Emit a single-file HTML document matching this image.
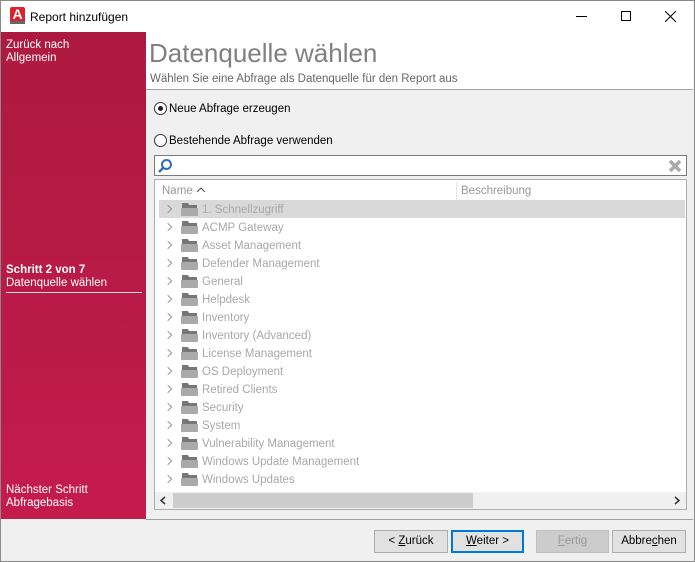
<!DOCTYPE html>
<html><head><meta charset="utf-8"><style>
*{box-sizing:border-box;margin:0;padding:0}
body{width:695px;height:562px;overflow:hidden;font-family:"Liberation Sans",sans-serif;font-size:12px;background:#f0f0f0;position:relative}
.abs{position:absolute}
.win{left:0;top:0;width:695px;height:562px;border:1px solid #8a8a8a;background:#f0f0f0}
.title{left:1px;top:1px;width:692px;height:31px;background:#fff}
.side{left:1px;top:32px;width:145px;height:487px;background:linear-gradient(#ad1a3f,#b81b45 50%,#c41b4d);color:#fff;font-size:11.5px;line-height:13px}
.hdr{left:146px;top:32px;width:547px;height:58px;background:#fff;border-bottom:1px solid #a0a0a0}
.row{position:absolute;left:4px;width:526px;height:18px;color:#a8a8a8;font-size:11.5px;line-height:18px}
.row .chev{position:absolute;left:6px;top:6px;width:6px;height:6px;border-right:1.5px solid #999;border-top:1.5px solid #999;transform:rotate(45deg)}
.row .fold{position:absolute;left:22px;top:3px;width:17px;height:13px}
.row span{position:absolute;left:43px}
.btn{position:absolute;top:530px;height:23px;border:1px solid #adadad;background:#e1e1e1;font-size:11.5px;text-align:center;line-height:21px;color:#000}
.radio{position:absolute;width:13px;height:13px;border:1px solid #333;border-radius:50%;background:#fff}
</style></head><body>
<div class="abs win"></div>
<div class="abs title">
 <div class="abs" style="left:9px;top:6px;width:15px;height:17px;background:#d8252d;border-radius:2px;color:#fff;font-weight:bold;font-size:14px;line-height:15px;text-align:center">A<div style="position:absolute;left:0;bottom:0;width:15px;height:3px;background:#666"></div></div>
 <div class="abs" style="left:29px;top:9px;font-size:12px;color:#000">Report hinzufügen</div>
 <div class="abs" style="left:575px;top:15px;width:11px;height:1px;background:#000"></div>
 <div class="abs" style="left:620px;top:10px;width:10px;height:10px;border:1px solid #000"></div>
 <svg class="abs" style="left:664px;top:10px" width="11" height="11"><path d="M0 0L11 11M11 0L0 11" stroke="#000" stroke-width="1"/></svg>
</div>
<div class="abs side">
 <div class="abs" style="left:5px;top:7px">Zurück nach<br>Allgemein</div>
 <div class="abs" style="left:5px;top:232px"><b>Schritt 2 von 7</b><br>Datenquelle wählen</div>
 <div class="abs" style="left:5px;top:260px;width:136px;height:1px;background:#ddd"></div>
 <div class="abs" style="left:5px;top:452px">Nächster Schritt<br>Abfragebasis</div>
</div>
<div class="abs hdr">
 <div class="abs" style="left:3px;top:6px;font-size:26px;color:#808080;font-weight:300">Datenquelle wählen</div>
 <div class="abs" style="left:4px;top:41px;font-size:11.5px;color:#666">Wählen Sie eine Abfrage als Datenquelle für den Report aus</div>
</div>
<div class="radio" style="left:154px;top:102px"><div style="position:absolute;left:3px;top:3px;width:5px;height:5px;border-radius:50%;background:#222"></div></div>
<div class="abs" style="left:169px;top:103px;font-size:11.5px">Neue Abfrage erzeugen</div>
<div class="radio" style="left:154px;top:134px"></div>
<div class="abs" style="left:169px;top:135px;font-size:11.5px">Bestehende Abfrage verwenden</div>
<div class="abs" style="left:154px;top:155px;width:533px;height:21px;background:#fff;border:1px solid #7a7a7a">
 <svg class="abs" style="left:2px;top:2px" width="16" height="16"><circle cx="9.5" cy="6.5" r="4.5" fill="none" stroke="#2f6db5" stroke-width="2"/><path d="M6 10L2 14" stroke="#2f6db5" stroke-width="2.5"/></svg>
 <svg class="abs" style="left:513px;top:3px" width="14" height="14"><path d="M2 2L12 12M12 2L2 12" stroke="#aaa" stroke-width="3.5"/></svg>
</div>
<div class="abs" style="left:154px;top:179px;width:533px;height:331px;background:#fff;border:1px solid #adadad">
 <div class="abs" style="left:7px;top:5px;color:#999;font-size:11.5px">Name</div>
 <svg class="abs" style="left:41px;top:7px" width="10" height="6"><path d="M1 5L5 1L9 5" fill="none" stroke="#555"/></svg>
 <div class="abs" style="left:301px;top:2px;width:1px;height:18px;background:#e5e5e5"></div>
 <div class="abs" style="left:306px;top:5px;color:#999;font-size:11.5px">Beschreibung</div>
 <div id="rows"></div>
 <div class="abs" style="left:0;top:312px;width:531px;height:17px;background:#f0f0f0"></div>
 <div class="abs" style="left:18px;top:313px;width:300px;height:15px;background:#cdcdcd"></div>
 <svg class="abs" style="left:4px;top:316px" width="8" height="9"><path d="M6 1L2 4.5L6 8" fill="none" stroke="#333" stroke-width="1.5"/></svg>
 <svg class="abs" style="left:518px;top:316px" width="8" height="9"><path d="M2 1L6 4.5L2 8" fill="none" stroke="#333" stroke-width="1.5"/></svg>
</div>
<div class="abs" style="left:146px;top:519px;width:547px;height:1px;background:#a0a0a0"></div>
<div class="btn" style="left:374px;width:74px">&lt; <u>Z</u>urück</div>
<div class="btn" style="left:451px;width:73px;border:2px solid #0078d7;line-height:19px"><u>W</u>eiter &gt;</div>
<div class="btn" style="left:536px;width:73px;border-color:#bfbfbf;background:#ccc;color:#999"><u>F</u>ertig</div>
<div class="btn" style="left:612px;width:74px">Abbre<u>c</u>hen</div>
<script>
var n=["1. Schnellzugriff","ACMP Gateway","Asset Management","Defender Management","General","Helpdesk","Inventory","Inventory (Advanced)","License Management","OS Deployment","Retired Clients","Security","System","Vulnerability Management","Windows Update Management","Windows Updates"];
var h="";n.forEach(function(t,i){h+='<div class="row" style="top:'+(20+i*18)+'px;'+(i==0?'background:#d9d9d9;':'')+'"><div class="chev"></div><svg class="fold" viewBox="0 0 17 13"><path d="M1 0H7L8 2H16V5H1Z" fill="#777"/><path d="M0 5H17V12Q17 13 16 13H1Q0 13 0 12Z" fill="#aaa"/></svg><span style="top:1px">'+t+'</span></div>'});
document.getElementById("rows").innerHTML=h;
</script>
</body></html>
